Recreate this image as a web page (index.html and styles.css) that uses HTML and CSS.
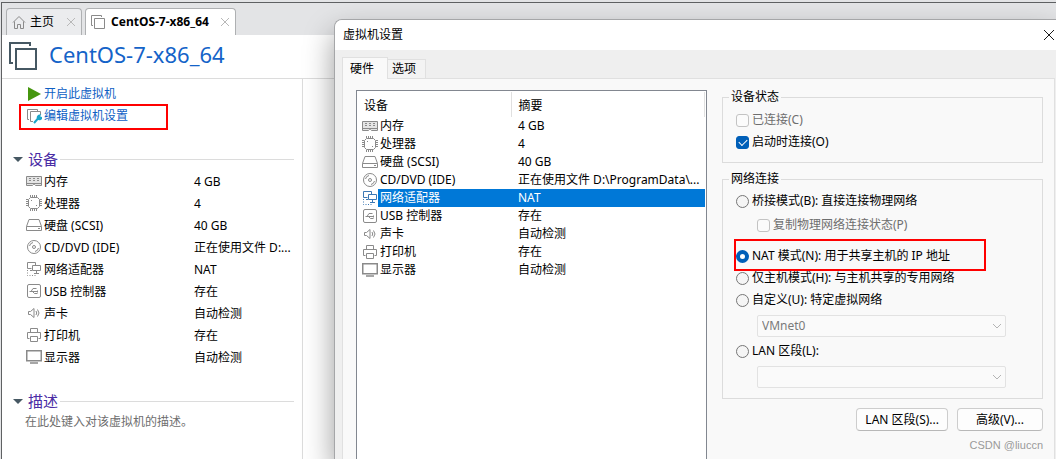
FILE: index.html
```html
<!DOCTYPE html>
<html lang="zh-CN">
<head>
<meta charset="utf-8">
<title>虚拟机设置</title>
<link rel="stylesheet" href="styles.css">
</head>
<body>
<svg class="sprite" aria-hidden="true">
  <symbol id="i-mem" viewBox="0 0 16 16"><path d="M.5 3.500h15v9H9.500l-1-1h-1l-1 1H.5z" fill="#e4e4e4"/><path d="M0 10.500h16" /><path d="M3 5.500h2M3 7.500h2M7 5.500h2M7 7.500h2M11 5.500h2M11 7.500h2" /></symbol>
  <symbol id="i-cpu" viewBox="0 0 16 16"><path d="M4.500 2.500h7l2 2v7l-2 2h-7l-2-2v-7z"/><path d="M4.500 0v2M6.500 0v2M8.500 0v2M10.500 0v2M4.500 14v2M6.500 14v2M8.500 14v2M10.500 14v2M0 4.500h2M0 6.500h2M0 8.500h2M0 10.500h2M14 4.500h2M14 6.500h2M14 8.500h2M14 10.500h2M5 5.500h1M10 10.500h1"/></symbol>
  <symbol id="i-disk" viewBox="0 0 16 16"><path d="M3 2.500h10l2.500 7v4H.5v-4zM.5 9.500h15M12 11.500h2"/></symbol>
  <symbol id="i-cd" viewBox="0 0 16 16"><circle cx="8" cy="8" r="6.500"/><circle cx="8" cy="8" r="1.500"/><path d="M3.500 7A4.500 4.500 0 0 1 7 3.500M9 12.500A4.500 4.500 0 0 0 12.500 9"/></symbol>
  <symbol id="i-net" viewBox="0 0 16 16"><path d="M5.500 7.500h-4v-6h8v3M4 9.500h2"/><path d="M6.500 4.500h8v5h-8zM10.500 9.500v3M8 12.500h5"/><path d="M1.500 9v5.500h8" stroke-dasharray="1 1.500"/></symbol>
  <symbol id="i-usb" viewBox="0 0 16 16"><rect x="1.500" y="1.500" width="13" height="13" rx="1.500"/><path d="M4 8.500h8M5 8.500l2-3h2M6.500 8.500l2 2h2M3.500 8.500h2M9 5.500h1.500M10 10.500h1.500M11.500 7.500v2"/></symbol>
  <symbol id="i-sound" viewBox="0 0 16 16"><path d="M2.500 6.500h2l3.500-3v9l-3.500-3h-2zM10 6q1.500 2 0 4M11.500 4.500q3 3.500 0 7"/></symbol>
  <symbol id="i-print" viewBox="0 0 16 16"><path d="M4.500 5.500v-4h7v4M3.500 11.500h-2v-6h13v6h-2M4.500 9.500h7v5h-7z"/></symbol>
  <symbol id="i-display" viewBox="0 0 16 16"><rect x=".75" y="1.750" width="14.500" height="10" stroke-width="1.500"/><path d="M4 14h8" stroke-width="1.500"/></symbol>
</svg>

<main class="window">
  <nav class="tabs" aria-label="标签页">
    <div class="tab">
      <svg class="ico" viewBox="0 0 16 16"><path d="M2 8.500l6-6 6 6M3.500 7.500v7h3v-4h3v4h3v-7"/></svg>
      <a href="#home">主页</a>
      <button class="tab-close" type="button" aria-label="关闭主页"><svg viewBox="0 0 10 10"><path d="M1 1l8 8M9 1L1 9"/></svg></button>
    </div>
    <div class="tab tab-active">
      <svg class="ico" viewBox="0 0 16 16"><path d="M4.500 4.500h10v10h-10zM3 11.500H1.500v-10h10V3"/></svg>
      <a href="#vm">CentOS-7-x86_64</a>
      <button class="tab-close" type="button" aria-label="关闭虚拟机"><svg viewBox="0 0 10 10"><path d="M1 1l8 8M9 1L1 9"/></svg></button>
    </div>
  </nav>
  <header class="vm-head">
    <svg class="vm-logo" viewBox="0 0 28 28"><path d="M7 7h20v20H7zM4 21H1V1h20v3"/></svg>
    <h1>CentOS-7-x86_64</h1>
  </header>
  <div class="vm-body">
    <aside class="side">
      <ul class="actions">
        <li><a href="#start"><svg class="ico" viewBox="0 0 16 16"><path class="play" d="M2 1l13 7-13 7z"/></svg>开启此虚拟机</a></li>
        <li class="marked"><a href="#edit"><svg class="ico" viewBox="0 0 16 16"><path d="M7 13.500H4.500v-10h10V7M3 11.500H1.500v-10h10V3"/><path class="wrench" d="M8 15l4-4.500"/><path class="wrench" d="M15.500 9l-2 1.500-1-1L13.500 7.500A2 2 0 0 0 12 10.500a2 2 0 0 0 3.500-1.500"/></svg>编辑虚拟机设置</a></li>
      </ul>
      <section class="block">
        <h2>设备</h2>
        <table class="specs">
          <tr><th scope="row"><svg class="ico"><use href="#i-mem"/></svg>内存</th><td>4 GB</td></tr>
          <tr><th scope="row"><svg class="ico"><use href="#i-cpu"/></svg>处理器</th><td>4</td></tr>
          <tr><th scope="row"><svg class="ico"><use href="#i-disk"/></svg>硬盘 (SCSI)</th><td>40 GB</td></tr>
          <tr><th scope="row"><svg class="ico"><use href="#i-cd"/></svg>CD/DVD (IDE)</th><td>正在使用文件 D:...</td></tr>
          <tr><th scope="row"><svg class="ico"><use href="#i-net"/></svg>网络适配器</th><td>NAT</td></tr>
          <tr><th scope="row"><svg class="ico"><use href="#i-usb"/></svg>USB 控制器</th><td>存在</td></tr>
          <tr><th scope="row"><svg class="ico"><use href="#i-sound"/></svg>声卡</th><td>自动检测</td></tr>
          <tr><th scope="row"><svg class="ico"><use href="#i-print"/></svg>打印机</th><td>存在</td></tr>
          <tr><th scope="row"><svg class="ico"><use href="#i-display"/></svg>显示器</th><td>自动检测</td></tr>
        </table>
      </section>
      <section class="block">
        <h2>描述</h2>
        <p class="note">在此处键入对该虚拟机的描述。</p>
      </section>
    </aside>
  </div>
</main>

<div class="dialog" role="dialog" aria-labelledby="dlg-title">
  <div class="dlg-bar">
    <h2 id="dlg-title">虚拟机设置</h2>
    <button class="dlg-close" type="button" aria-label="关闭"><svg viewBox="0 0 12 12"><path d="M1 1l10 10M11 1L1 11"/></svg></button>
  </div>
  <div class="dlg-tabs" role="tablist">
    <button type="button" role="tab" aria-selected="true">硬件</button>
    <button type="button" role="tab" aria-selected="false">选项</button>
  </div>
  <div class="pane">
    <div class="list">
      <table class="devices">
        <thead><tr><th scope="col">设备</th><th scope="col">摘要</th></tr></thead>
        <tbody>
          <tr><td><span class="dev"><svg class="ico"><use href="#i-mem"/></svg><span>内存</span></span></td><td>4 GB</td></tr>
          <tr><td><span class="dev"><svg class="ico"><use href="#i-cpu"/></svg><span>处理器</span></span></td><td>4</td></tr>
          <tr><td><span class="dev"><svg class="ico"><use href="#i-disk"/></svg><span>硬盘 (SCSI)</span></span></td><td>40 GB</td></tr>
          <tr><td><span class="dev"><svg class="ico"><use href="#i-cd"/></svg><span>CD/DVD (IDE)</span></span></td><td>正在使用文件 D:\ProgramData\...</td></tr>
          <tr class="selected"><td><span class="dev"><svg class="ico"><use href="#i-net"/></svg><span>网络适配器</span></span></td><td>NAT</td></tr>
          <tr><td><span class="dev"><svg class="ico"><use href="#i-usb"/></svg><span>USB 控制器</span></span></td><td>存在</td></tr>
          <tr><td><span class="dev"><svg class="ico"><use href="#i-sound"/></svg><span>声卡</span></span></td><td>自动检测</td></tr>
          <tr><td><span class="dev"><svg class="ico"><use href="#i-print"/></svg><span>打印机</span></span></td><td>存在</td></tr>
          <tr><td><span class="dev"><svg class="ico"><use href="#i-display"/></svg><span>显示器</span></span></td><td>自动检测</td></tr>
        </tbody>
      </table>
    </div>
    <form class="options">
      <fieldset class="status">
        <legend>设备状态</legend>
        <label class="opt"><input type="checkbox" disabled>已连接(C)</label>
        <label class="opt"><input type="checkbox" checked>启动时连接(O)</label>
      </fieldset>
      <fieldset class="network">
        <legend>网络连接</legend>
        <label class="opt"><input type="radio" name="net">桥接模式(B): 直接连接物理网络</label>
        <label class="opt sub"><input type="checkbox" disabled>复制物理网络连接状态(P)</label>
        <label class="opt marked"><input type="radio" name="net" checked>NAT 模式(N): 用于共享主机的 IP 地址</label>
        <label class="opt"><input type="radio" name="net">仅主机模式(H): 与主机共享的专用网络</label>
        <label class="opt"><input type="radio" name="net">自定义(U): 特定虚拟网络</label>
        <div class="combo"><select disabled aria-label="虚拟网络"><option>VMnet0</option></select><svg viewBox="0 0 10 6"><path d="M1 1l4 4 4-4"/></svg></div>
        <label class="opt"><input type="radio" name="net">LAN 区段(L):</label>
        <div class="combo"><select disabled aria-label="LAN 区段"><option></option></select><svg viewBox="0 0 10 6"><path d="M1 1l4 4 4-4"/></svg></div>
      </fieldset>
      <div class="buttons">
        <button type="button">LAN 区段(S)...</button>
        <button type="button">高级(V)...</button>
      </div>
      <p class="credit">CSDN @liuccn</p>
    </form>
  </div>
</div>
</body>
</html>
```

FILE: styles.css
```css
* { box-sizing: border-box; }
body {
  margin: 0;
  padding: 2px 0 0 1px;
  min-height: 100vh;
  display: flex;
  position: relative;
  overflow: hidden;
  background: #e3e4e6;
  color: #000;
  font: 12px/18px "Noto Sans", "Noto Sans CJK SC", sans-serif;
}
h1, h2, p, ul { margin: 0; padding: 0; font-weight: 400; }
ul { list-style: none; }
a { color: inherit; text-decoration: none; }
button, select { font: inherit; color: inherit; }
table { border-collapse: collapse; table-layout: fixed; width: 100%; }
th, td { padding: 0; text-align: left; font-weight: 400; white-space: nowrap; }
svg { fill: none; stroke: #8a8a8a; flex: none; }
.sprite { position: absolute; width: 0; height: 0; }
.ico { width: 16px; height: 16px; }

.window {
  flex: 1;
  display: flex;
  flex-direction: column;
  border: solid #5f6163;
  border-width: 1px 0 0 1px;
  background: #fff;
}
.tabs {
  display: flex;
  align-items: flex-end;
  gap: 3px;
  height: 32px;
  padding-left: 4px;
  background: #e3e4e6;
}
.tab {
  display: flex;
  align-items: center;
  gap: 3px;
  height: 27px;
  padding: 0 5px 0 4px;
  border: 1px solid #aeb0b2;
  border-bottom: 0;
  border-radius: 4px 4px 0 0;
  background: #ebecee;
}
.tab-active { gap: 4px; background: #fff; font-weight: 700; }
.tab-close { padding: 0; border: 0; background: none; display: flex; margin-left: 9px; }
.tab-active .tab-close { margin-left: 7px; }
.tab-close svg { width: 10px; height: 10px; stroke: #b8b8b8; }
.tab-active .ico { margin-right: 1px; }

.vm-head {
  display: flex;
  align-items: center;
  gap: 12px;
  height: 44px;
  padding: 0 0 2px 7px;
  border-bottom: 1px solid #dcdcdc;
}
.vm-logo { width: 28px; height: 28px; stroke: #465863; stroke-width: 2; }
h1 { color: #1463c8; font-size: 22px; line-height: 32px; padding-bottom: 4px; }

.vm-body { flex: 1; display: flex; }
.side { width: 301px; padding: 4px 8px 0 11px; border-right: 1px solid #dcdcdc; }
.actions { color: #0f5fc4; }
.actions li { height: 22px; padding-left: 13px; position: relative; }
.actions a { display: flex; align-items: center; gap: 2px; height: 22px; }
.play { fill: #46960f; stroke: none; }
.wrench { stroke: #19a5c8; stroke-width: 2; }
.actions .marked::after {
  content: "";
  position: absolute;
  inset: -1px 126px -3px 6px;
  border: 2px solid #f00;
}
.block { margin-top: 21px; }
.block h2 {
  display: flex;
  align-items: center;
  height: 22px;
  margin-bottom: 1px;
  color: #4a2da5;
  font-size: 15px;
}
.block h2::before {
  content: "";
  border: 5px solid transparent;
  border-top-color: #465863;
  border-bottom: 0;
  margin-right: 5px;
}
.block h2::after { content: ""; flex: 1; height: 1px; margin-left: 2px; background: #dcdcdc; }
.specs tr { height: 22px; }
.specs th { width: 181px; padding-left: 13px; }
.specs .ico { margin-right: 2px; vertical-align: -3px; }
.note { padding-left: 12px; color: #6e6e6e; }

.dialog {
  position: absolute;
  inset: 19px 0 0 334px;
  display: flex;
  flex-direction: column;
  border: solid #a5a6a8;
  border-width: 1px 0 0 1px;
  border-radius: 8px 0 0 0;
  background: #efefef;
  box-shadow: 0 14px 30px rgba(0, 0, 0, .4);
}
.dlg-bar {
  display: flex;
  align-items: center;
  justify-content: space-between;
  height: 30px;
  padding: 0 1px 0 8px;
  border-radius: 7px 0 0 0;
  background: #fff;
}
.dlg-bar h2 { font-size: 12px; }
.dlg-close { display: flex; padding: 0; border: 0; background: none; }
.dlg-close svg { width: 12px; height: 12px; stroke: #1a1a1a; }
.dlg-tabs { display: flex; align-items: flex-end; padding: 7px 0 0 7px; height: 28px; }
.dlg-tabs button {
  height: 19px;
  padding: 0 9px 0 4px;
  border: 1px solid #e0e0e0;
  border-width: 1px 1px 0 0;
  background: #f3f3f3;
  line-height: 18px;
}
.dlg-tabs [aria-selected="true"] {
  height: 22px;
  margin-bottom: -1px;
  padding: 0 13px 0 7px;
  border-left-width: 1px;
  background: #f9f9f9;
  position: relative;
}
.pane {
  flex: 1;
  display: grid;
  grid-template-columns: 351fr 321fr;
  gap: 15px;
  margin: 0 1px 0 7px;
  padding: 11px 11px 0 13px;
  border: solid #e0e0e0;
  border-width: 1px 1px 0;
  background: #f9f9f9;
}
.list { border: 1px solid #828790; border-bottom: 0; background: #fff; padding: 1px 1px 0 0; }
.devices thead th { height: 25px; padding: 2px 0 0 7px; border-right: 1px solid #e0e0e0; }
.devices thead th:first-child { width: 154px; }
.devices thead th + th { padding-left: 7px; }
.devices tbody tr { height: 18px; }
.devices td:first-child { padding-left: 5px; }
.devices td + td { padding-left: 7px; }
.dev { display: flex; align-items: center; }
.dev span { flex: 1; padding-left: 2px; }
.selected { color: #fff; }
.selected .dev span, .selected td + td { background: #0078d7; }
.selected .ico { stroke: #3c78b4; }

fieldset { margin: 0; padding: 0 13px; border: 1px solid #dcdcdc; min-width: 0; }
legend { padding: 0 2px; margin-left: -7px; height: 18px; }
.status { height: 75px; margin-top: -2px; }
.network { margin-top: 7px; padding-bottom: 10px; }
.opt { display: flex; align-items: center; gap: 3px; height: 22px; position: relative; white-space: nowrap; }
.status legend + .opt { margin-top: 3px; }
.network legend + .opt { margin-top: 2px; }
.opt input {
  appearance: none;
  width: 13px;
  height: 13px;
  margin: 0;
  flex: none;
  border: 1px solid #767676;
  background: #f5f5f5;
}
.opt input[type="checkbox"] { border-radius: 3px; }
.opt input[type="radio"] { border-radius: 50%; }
.opt input:disabled { border-color: #c3c3c3; background: #fbfbfb; }
.opt:has(:disabled) { color: #6e6e6e; }
.opt input[type="checkbox"]:checked { display: grid; place-items: center; border-color: #005fb8; background: #005fb8; }
.opt input[type="checkbox"]:checked::before {
  content: "";
  width: 7px;
  height: 4px;
  margin-bottom: 2px;
  border: solid #fff;
  border-width: 0 0 1px 1px;
  transform: rotate(-45deg);
}
.opt input[type="radio"]:checked { border: 4px solid #005fb8; background: #fff; }
.sub { margin: 2px 0 0 21px; }
.opt.marked { margin-top: 9px; }
.opt.marked::before {
  content: "";
  position: absolute;
  inset: -6px 43px -4px -2px;
  border: 2px solid #f00;
}
.combo {
  display: grid;
  align-items: center;
  margin: 4px 23px 3px 21px;
}
.combo select {
  grid-area: 1 / 1;
  appearance: none;
  width: 100%;
  height: 22px;
  padding: 0 4px;
  border: 1px solid #e2e2e2;
  border-radius: 2px;
  background: #fafafa;
  color: #7a7a7a;
  opacity: 1;
  line-height: 18px;
}
.combo svg { grid-area: 1 / 1; justify-self: end; width: 10px; height: 6px; margin-right: 4px; stroke: #b4b4b4; }
.combo:last-child { margin-bottom: 0; }
.buttons { display: flex; justify-content: flex-end; gap: 9px; margin-top: 9px; }
.buttons button {
  height: 23px;
  min-width: 86px;
  padding: 0 8px;
  border: 1px solid #cdcdcd;
  border-bottom-color: #b8b8b8;
  border-radius: 4px;
  background: #fdfdfd;
  line-height: 20px;
}
.credit { margin-top: 5px; text-align: right; color: #999; font-family: "Liberation Sans", sans-serif; font-size: 11px; }
```
